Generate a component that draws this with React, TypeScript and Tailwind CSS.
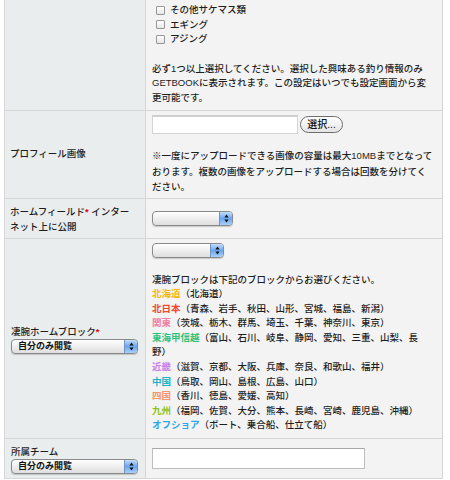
import React from "react";

const FONT = { fontFamily: '"Liberation Sans", "Noto Sans CJK JP", sans-serif' };

function Arrows() {
  return (
    <svg width="5" height="9" viewBox="0 0 5 9" className="block">
      <path d="M2.5 0.5 L4.6 3.4 L0.4 3.4 Z" fill="#111" />
      <path d="M2.5 8.5 L4.6 5.6 L0.4 5.6 Z" fill="#111" />
    </svg>
  );
}

function Select({ className, label }: { className: string; label?: string }) {
  return (
    <div
      className={
        "flex h-[15px] items-stretch overflow-hidden rounded-[4px] border border-[#8a8a8a] bg-gradient-to-b from-[#ffffff] to-[#dedede] shadow-[0_1px_1px_rgba(0,0,0,0.18)] " +
        className
      }
    >
      <div className="flex-1 pl-[6px] text-[9px] font-bold leading-[13px] text-[#111]">{label}</div>
      <div className="flex w-[13px] items-center justify-center border-l border-[#7094c4] bg-gradient-to-b from-[#c4defb] via-[#6aa5ec] to-[#a8d0fa]">
        <Arrows />
      </div>
    </div>
  );
}

function Checkbox() {
  return (
    <span className="inline-block h-[9px] w-[9px] rounded-[1px] border border-[#989898] bg-gradient-to-b from-white to-[#e6e6e6]" />
  );
}

const Star = () => <span className="font-bold text-[#e60012]">*</span>;

const regions: [string, string, string][] = [
  ["北海道", "text-[#f6b70f]", "（北海道）"],
  ["北日本", "text-[#f2472a]", "（青森、岩手、秋田、山形、宮城、福島、新潟）"],
  ["関東", "text-[#f27ea4]", "（茨城、栃木、群馬、埼玉、千葉、神奈川、東京）"],
  ["東海甲信越", "text-[#30c27c]", "（富山、石川、岐阜、静岡、愛知、三重、山梨、長"],
];
const regions2: [string, string, string][] = [
  ["近畿", "text-[#c780e8]", "（滋賀、京都、大阪、兵庫、奈良、和歌山、福井）"],
  ["中国", "text-[#1fb2c4]", "（鳥取、岡山、島根、広島、山口）"],
  ["四国", "text-[#f8946c]", "（香川、徳島、愛媛、高知）"],
  ["九州", "text-[#8cc31e]", "（福岡、佐賀、大分、熊本、長崎、宮崎、鹿児島、沖縄）"],
  ["オフショア", "text-[#2ea6ea]", "（ボート、乗合船、仕立て船）"],
];

export default function App() {
  return (
    <div className="h-[480px] w-[450px] overflow-hidden bg-white text-[9.5px] font-medium text-[#1e1e1e]" style={FONT}>
      <div className="ml-[4px] w-[439px] border-x border-[#d6d6d6]">
        {/* Row 1 */}
        <div className="flex h-[111px] border-b border-[#d6d6d6]">
          <div className="w-[141px] shrink-0 border-r border-[#d6d6d6] bg-[#e9edee]" />
          <div className="flex flex-1 flex-col justify-end overflow-hidden bg-[#f3f3f3] pb-[5px] pl-[6px]">
            <div className="flex flex-col pl-[4px] leading-[14.5px]">
              {["その他サケマス類", "エギング", "アジング"].map((t) => (
                <div key={t} className="flex h-[14.5px] items-center gap-[5px] whitespace-nowrap">
                  <Checkbox />
                  <span>{t}</span>
                </div>
              ))}
            </div>
            <p className="mt-[15px] whitespace-nowrap leading-[14.5px]">
              必ず1つ以上選択してください。選択した興味ある釣り情報のみ
              <br />
              GETBOOKに表示されます。この設定はいつでも設定画面から変
              <br />
              更可能です。
            </p>
          </div>
        </div>

        {/* Row 2 */}
        <div className="flex h-[88px] border-b border-[#d6d6d6]">
          <div className="flex w-[141px] shrink-0 items-center border-r border-[#d6d6d6] bg-[#e9edee] pl-[5px]">
            プロフィール画像
          </div>
          <div className="flex flex-1 flex-col bg-[#f3f3f3] pl-[6px] pt-[4px]">
            <div className="flex items-center gap-[2px]">
              <div className="h-[19px] w-[146px] border border-[#d4d4d4] border-t-[2px] border-t-[#cfcfcf] bg-white" />
              <div className="flex h-[17px] w-[43px] items-center justify-center rounded-full border border-[#6e6e6e] bg-gradient-to-b from-white to-[#e4e4e4] text-[10px] leading-none text-[#111]">
                選択...
              </div>
            </div>
            <p className="mt-[14px] whitespace-nowrap leading-[15.5px]">
              ※一度にアップロードできる画像の容量は最大10MBまでとなって
              <br />
              おります。複数の画像をアップロードする場合は回数を分けてく
              <br />
              ださい。
            </p>
          </div>
        </div>

        {/* Row 3 */}
        <div className="flex h-[40px] border-b border-[#d6d6d6]">
          <div className="flex w-[141px] shrink-0 items-center border-r border-[#d6d6d6] bg-[#e9edee] pl-[5px]">
            <p className="whitespace-nowrap leading-[15px]">
              ホームフィールド<Star /> インター
              <br />
              ネット上に公開
            </p>
          </div>
          <div className="flex flex-1 items-center bg-[#f3f3f3] pl-[6px]">
            <Select className="w-[81px]" />
          </div>
        </div>

        {/* Row 4 */}
        <div className="flex h-[200px] border-b border-[#d6d6d6]">
          <div className="flex w-[141px] shrink-0 flex-col justify-center border-r border-[#d6d6d6] bg-[#e9edee] pl-[6px]">
            <div className="leading-[15px]">
              凄腕ホームブロック<Star />
            </div>
            <Select className="w-[127px]" label="自分のみ閲覧" />
          </div>
          <div className="flex flex-1 flex-col bg-[#f3f3f3] pl-[6px] pt-[4px]">
            <Select className="w-[72px]" />
            <div className="mt-[14.5px] whitespace-nowrap leading-[14.6px]">
              <div>凄腕ブロックは下記のブロックからお選びください。</div>
              {regions.map(([n, c, r]) => (
                <div key={n}>
                  <span className={"font-bold " + c}>{n}</span>
                  {r}
                </div>
              ))}
              <div>野）</div>
              {regions2.map(([n, c, r]) => (
                <div key={n}>
                  <span className={"font-bold " + c}>{n}</span>
                  {r}
                </div>
              ))}
            </div>
          </div>
        </div>

        {/* Row 5 */}
        <div className="flex h-[40px] border-b border-[#d6d6d6]">
          <div className="flex w-[141px] shrink-0 flex-col justify-center border-r border-[#d6d6d6] bg-[#e9edee] pl-[6px] pt-[1px]">
            <div className="leading-[15px]">所属チーム</div>
            <Select className="w-[127px]" label="自分のみ閲覧" />
          </div>
          <div className="flex flex-1 items-center bg-[#f3f3f3] pl-[6px]">
            <div className="h-[21px] w-[213px] border border-[#bdbdbd] border-t-[#a8a8a8] bg-white" />
          </div>
        </div>
      </div>
    </div>
  );
}
